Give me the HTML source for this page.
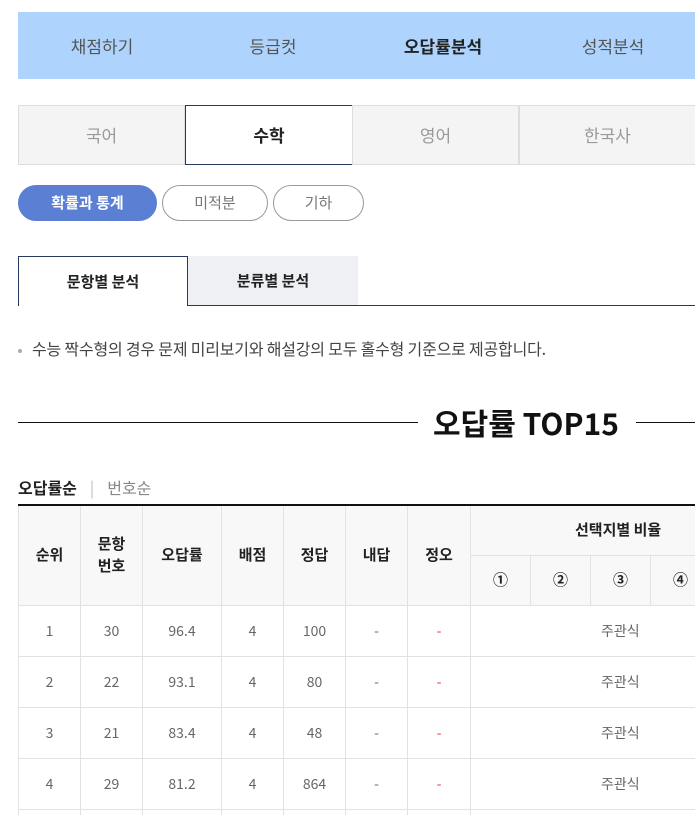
<!DOCTYPE html>
<html><head><meta charset="utf-8"><style>
*{margin:0;padding:0;box-sizing:border-box}
html,body{width:695px;height:815px;overflow:hidden}
body{background:#fff;font-family:"Noto Sans CJK KR","Liberation Sans",sans-serif;color:#333}
#w{position:relative;width:695px;height:815px;overflow:hidden}
.a{position:absolute}
.nav{left:18px;top:12px;width:677px;height:67px;background:#aed4fe}
.nav span{position:absolute;top:0;line-height:67px;font-size:17px;color:#555;transform:translateX(-50%);white-space:nowrap}
.sub{top:105px;height:60px;width:167px;background:#f4f4f4;border:1px solid #ddd;text-align:center;line-height:58px;font-size:17px;color:#999}
.pill{top:185px;height:36px;border-radius:18px;border:1px solid #999;text-align:center;line-height:34px;font-size:15px;color:#777}
.tb{top:256px;height:50px;text-align:center;line-height:50px;font-size:15px;font-weight:bold;color:#222}
table{position:absolute;left:18px;top:504px;width:752px;border-collapse:collapse;table-layout:fixed;border-top:2px solid #111;font-size:14px}
td,th{border:1px solid #e2e2e2;text-align:center;padding:0}
th{background:#f8f8f8;font-weight:bold;color:#222;font-size:15px;line-height:22px}
td{height:51px;color:#666}
td.r{color:#e33}
td.j{text-align:left;padding-left:130px}
</style></head><body><div id="w">
<div class="a nav">
<span style="left:84px">채점하기</span>
<span style="left:255px">등급컷</span>
<span style="left:425px;font-weight:bold;color:#222">오답률분석</span>
<span style="left:595px">성적분석</span>
</div>
<div class="a sub" style="left:18px">국어</div>
<div class="a sub" style="left:185px;width:168px;background:#fff;border-color:#263a5f;color:#222;font-weight:bold">수학</div>
<div class="a sub" style="left:352px">영어</div>
<div class="a sub" style="left:519px;width:176px;border-right:none">한국사</div>
<div class="a pill" style="left:18px;width:139px;background:#5b80d3;border-color:#5b80d3;color:#fff;font-weight:bold">확률과 통계</div>
<div class="a pill" style="left:162px;width:106px">미적분</div>
<div class="a pill" style="left:273px;width:91px">기하</div>
<div class="a" style="left:18px;top:305px;width:677px;height:1px;background:#263a5f"></div>
<div class="a tb" style="left:18px;width:170px;background:#fff;border:1px solid #263a5f;border-bottom:none;height:50px">문항별 분석</div>
<div class="a tb" style="left:188px;width:170px;background:#eff0f4;height:49px">분류별 분석</div>
<div class="a" style="left:18px;top:337px;font-size:16px;letter-spacing:-0.2px;color:#444;line-height:22px;white-space:nowrap"><span style="display:inline-block;width:4px;height:4px;border-radius:2px;background:#aaa;vertical-align:middle;margin-right:10px"></span>수능 짝수형의 경우 문제 미리보기와 해설강의 모두 홀수형 기준으로 제공합니다.</div>
<div class="a" style="left:18px;top:422px;width:400px;height:1px;background:#111"></div>
<div class="a" style="left:636px;top:422px;width:59px;height:1px;background:#111"></div>
<div class="a" style="left:433px;top:401px;font-size:30px;font-weight:bold;color:#111;line-height:42px;white-space:nowrap">오답률 TOP15</div>
<div class="a" style="left:18px;top:476px;font-size:16px;line-height:22px;white-space:nowrap"><b style="color:#222">오답률순</b><span style="color:#bbb;margin:0 13px">|</span><span style="color:#888">번호순</span></div>
<table>
<colgroup><col style="width:62px"><col style="width:62px"><col style="width:79px"><col style="width:62px"><col style="width:62px"><col style="width:62px"><col style="width:63px"><col style="width:60px"><col style="width:60px"><col style="width:60px"><col style="width:60px"><col style="width:60px"></colgroup>
<tr style="height:50px"><th rowspan="2">순위</th><th rowspan="2">문항<br>번호</th><th rowspan="2">오답률</th><th rowspan="2">배점</th><th rowspan="2">정답</th><th rowspan="2">내답</th><th rowspan="2">정오</th><th colspan="5" style="text-align:left;padding-left:104px">선택지별 비율</th></tr>
<tr style="height:50px"><th>①</th><th>②</th><th>③</th><th>④</th><th>⑤</th></tr>
<tr><td>1</td><td>30</td><td>96.4</td><td>4</td><td>100</td><td>-</td><td class="r">-</td><td colspan="5" class="j">주관식</td></tr>
<tr><td>2</td><td>22</td><td>93.1</td><td>4</td><td>80</td><td>-</td><td class="r">-</td><td colspan="5" class="j">주관식</td></tr>
<tr><td>3</td><td>21</td><td>83.4</td><td>4</td><td>48</td><td>-</td><td class="r">-</td><td colspan="5" class="j">주관식</td></tr>
<tr><td>4</td><td>29</td><td>81.2</td><td>4</td><td>864</td><td>-</td><td class="r">-</td><td colspan="5" class="j">주관식</td></tr>
<tr><td>5</td><td>28</td><td>80.0</td><td>4</td><td>3</td><td>-</td><td class="r">-</td><td colspan="5" class="j">주관식</td></tr>
</table>
</div></body></html>
